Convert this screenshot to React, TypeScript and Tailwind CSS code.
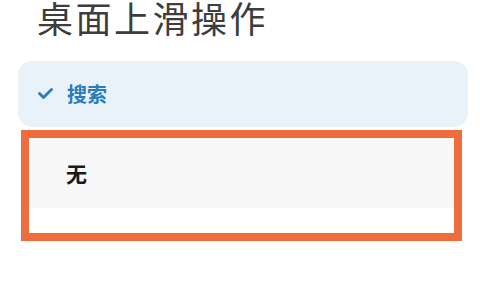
export default function App() {
  return (
    <div className="w-[480px] h-[300px] bg-white overflow-hidden" style={{ fontFamily: '"Noto Sans CJK SC", "Noto Sans", sans-serif' }}>
      {/* Title */}
      <h1 className="pl-[37px] pt-[1px] text-[36px] leading-[32px] tracking-[2.5px] text-[#3d3d3d] font-normal">
        桌面上滑操作
      </h1>

      {/* Selected option */}
      <div className="mt-[28px] ml-[18px] w-[450px] h-[66px] rounded-[14px] bg-[#e9f1f9] flex items-center pl-[20px] gap-[14px]">
        <svg width="15" height="12" viewBox="0 0 15 12" className="text-[#2b7bbd]">
          <polyline points="1.5,5.5 5.5,9.5 13.5,1.5" fill="none" stroke="currentColor" strokeWidth="2.8" strokeLinecap="round" strokeLinejoin="round" />
        </svg>
        <span className="text-[20px] font-bold text-[#2b7bbd] leading-none">搜索</span>
      </div>

      {/* Highlighted option */}
      <div className="mt-[3px] ml-[21px] w-[441px] border-[8px] border-[#ef6d3d] bg-white">
        <div className="h-[70px] bg-[#f7f7f7] flex items-center pl-[37px]">
          <span className="text-[21px] font-bold text-[#1a1a1a] leading-none">无</span>
        </div>
        <div className="h-[25px] bg-white" />
      </div>
    </div>
  );
}
